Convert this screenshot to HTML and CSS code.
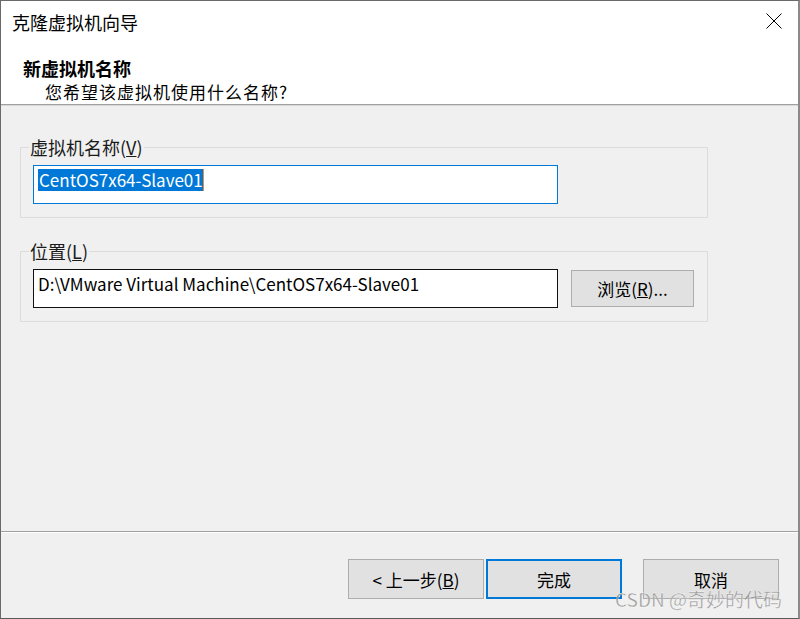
FILE: index.html
```html
<!DOCTYPE html>
<html lang="zh-CN">
<head>
    <meta charset="UTF-8">
    <title>克隆虚拟机向导</title>
    <link rel="stylesheet" href="styles.css">
</head>
<body>

    <div class="window">
        <!-- Title bar -->
        <div class="titlebar">
            <span class="title">克隆虚拟机向导</span>
            <svg class="close" width="16" height="16" viewBox="0 0 16 16">
                <path d="M0.5 0.5 L15.5 15.5 M15.5 0.5 L0.5 15.5" stroke="#000" stroke-width="1" fill="none"/>
            </svg>
        </div>

        <!-- Wizard page header -->
        <div class="header">
            <div class="head-title">新虚拟机名称</div>
            <div class="head-sub">您希望该虚拟机使用什么名称?</div>
        </div>

        <div class="content">
            <fieldset class="group">
                <legend>虚拟机名称(<u>V</u>)</legend>
                <div class="textbox focused"><span class="selected">CentOS7x64-Slave01</span></div>
            </fieldset>

            <fieldset class="group group-location">
                <legend>位置(<u>L</u>)</legend>
                <div class="row">
                    <div class="textbox">D:\VMware Virtual Machine\CentOS7x64-Slave01</div>
                    <button class="button browse">浏览(<u>R</u>)...</button>
                </div>
            </fieldset>
        </div>

        <!-- Wizard buttons -->
        <div class="footer">
            <button class="button">&lt; 上一步(<u>B</u>)</button>
            <button class="button default">完成</button>
            <button class="button cancel">取消</button>
        </div>

        <div class="watermark">CSDN @奇妙的代码</div>
    </div>

</body>
</html>
```

FILE: styles.css
```css
html, body {
    margin: 0;
    padding: 0;
    background-color: #3a3a3a;
}
body {
    font-family: "Noto Sans CJK SC", "Noto Sans", sans-serif;
    font-size: 18px;
    color: #000;
}
.window {
    position: relative;
    box-sizing: border-box;
    width: 800px;
    height: 619px;
    display: flex;
    flex-direction: column;
    background-color: #f0f0f0;
    border-top: 1px solid #6a6a6a;
    border-left: 1px solid #6a6a6a;
    border-right: 2px solid #8a8a8a;
    border-bottom: 1px solid #5a5a5a;
    overflow: hidden;
}
.titlebar {
    height: 42px;
    background-color: #fff;
    display: flex;
    align-items: center;
    justify-content: space-between;
    padding: 0 16px 0 11px;
}
.title {
    line-height: 22px;
    margin-top: -1px;
}
.close {
    display: block;
    margin-top: -3px;
}
.header {
    box-sizing: border-box;
    height: 62px;
    background-color: #fff;
    padding: 14px 0 0 22px;
    border-bottom: 1px solid #a0a0a0;
    box-shadow: 0 1px 0 #d8d8d8;
}
.head-title {
    font-weight: bold;
    line-height: 22px;
}
.head-sub {
    font-size: 17px;
    line-height: 20px;
    margin: 3px 0 0 22px;
    letter-spacing: 1px;
}
.content {
    flex: 1;
    padding: 32px 0 0 19px;
}
.group {
    box-sizing: border-box;
    width: 688px;
    margin: 0;
    padding: 8px 12px 13px 12px;
    border: 1px solid #dcdcdc;
    min-width: 0;
}
.group legend {
    padding: 0 1px;
    margin-left: -4px;
    line-height: 20px;
    color: #1a1a1a;
}
.group-location {
    margin-top: 23px;
}
.row {
    display: flex;
    align-items: center;
    gap: 13px;
}
.textbox {
    box-sizing: border-box;
    width: 525px;
    height: 39px;
    background-color: #fff;
    border: 1px solid #111;
    padding: 3px 0 0 4px;
    font-size: 17px;
    line-height: 22px;
    white-space: nowrap;
}
.textbox.focused {
    border-color: #0078d7;
}
.selected {
    background-color: #0078d7;
    color: #fff;
    border-right: 1px solid #f08a24;
    display: inline-block;
    padding: 0 0 0 1px;
}
.button {
    box-sizing: border-box;
    width: 136px;
    height: 40px;
    font-family: inherit;
    font-size: 17px;
    color: #000;
    background-color: #e1e1e1;
    border: 1px solid #adadad;
    border-radius: 0;
    padding: 0;
}
.button.browse {
    width: 123px;
    height: 37px;
}
.footer {
    box-sizing: border-box;
    height: 87px;
    border-top: 1px solid #a0a0a0;
    box-shadow: inset 0 1px 0 #fff;
    display: flex;
    justify-content: flex-end;
    align-items: flex-start;
    padding: 27px 19px 0 0;
}
.button.default {
    margin-left: 2px;
    border: 2px solid #0078d7;
}
.button.cancel {
    margin-left: 21px;
}
.watermark {
    position: absolute;
    left: 614px;
    top: 585px;
    font-size: 19px;
    line-height: 26px;
    color: rgba(130, 130, 130, 0.8);
    -webkit-text-stroke: 0.3px #fff;
}
```
